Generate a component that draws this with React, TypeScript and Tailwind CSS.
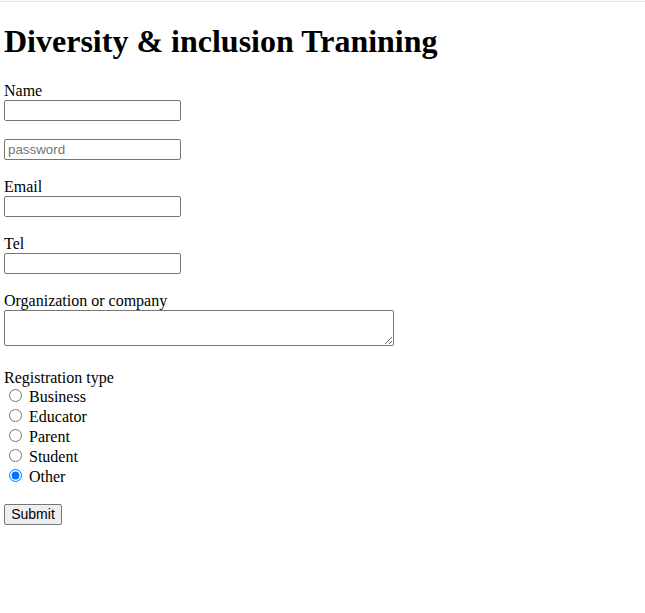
import React from "react";

const serif = { fontFamily: '"Liberation Serif", "Times New Roman", serif' };

function Field({ label, children }: { label: string; children: React.ReactNode }) {
  return (
    <div>
      <div className="h-[19px] text-[16px] leading-[19px] text-black">{label}</div>
      {children}
    </div>
  );
}

const inputCls =
  "block w-[177px] h-[21px] border border-[#767676] rounded-[2px] px-[3px] py-px bg-white text-[13.333px] leading-[17px] text-black placeholder:text-[#757575] font-['Liberation_Sans',Arial,sans-serif] outline-none";

export default function App() {
  const options = ["Business", "Educator", "Parent", "Student", "Other"];
  return (
    <div className="min-h-[613px] bg-white text-black font-['Liberation_Serif','Times_New_Roman',serif]" style={serif}>
      <div className="mt-px h-px bg-[#e3e3e3]" />
      <div className="px-[4px]">
        <h1 className="mt-[21px] mb-[21px] text-[32px] font-bold leading-[37px]">
          Diversity &amp; inclusion Tranining
        </h1>
        <form onSubmit={(e) => e.preventDefault()}>
          <Field label="Name">
            <input type="text" className={inputCls} />
          </Field>
          <div className="h-[18px]" />
          <input type="password" placeholder="password" className={inputCls} />
          <div className="h-[17px]" />
          <Field label="Email">
            <input type="email" className={inputCls} />
          </Field>
          <div className="h-[17px]" />
          <Field label="Tel">
            <input type="tel" className={inputCls} />
          </Field>
          <div className="h-[17px]" />
          <Field label="Organization or company">
            <textarea className="block w-[390px] h-[36px] border border-[#767676] rounded-[2px] px-[2px] py-px bg-white text-[13.333px] font-['Liberation_Mono',monospace] outline-none" />
          </Field>
          <div className="h-[22px]" />
          <div className="h-[18px] text-[16px] leading-[19px]">Registration type</div>
          {options.map((o) => (
            <label key={o} className="flex h-[20px] items-start">
              <input
                type="radio"
                name="reg"
                defaultChecked={o === "Other"}
                className="ml-[5px] mr-[3px] mt-[3px] h-[13px] w-[13px] accent-[#0075ff]"
              />
              <span className="ml-[4px] mt-px text-[16px] leading-[20px]">{o}</span>
            </label>
          ))}
          <div className="h-[18px]" />
          <button
            type="submit"
            className="flex h-[21px] w-[58px] items-center justify-center rounded-[2px] border border-[#767676] bg-[#efefef] text-[14px] leading-[17px] text-black font-['Liberation_Sans',Arial,sans-serif]"
          >
            Submit
          </button>
        </form>
      </div>
    </div>
  );
}
